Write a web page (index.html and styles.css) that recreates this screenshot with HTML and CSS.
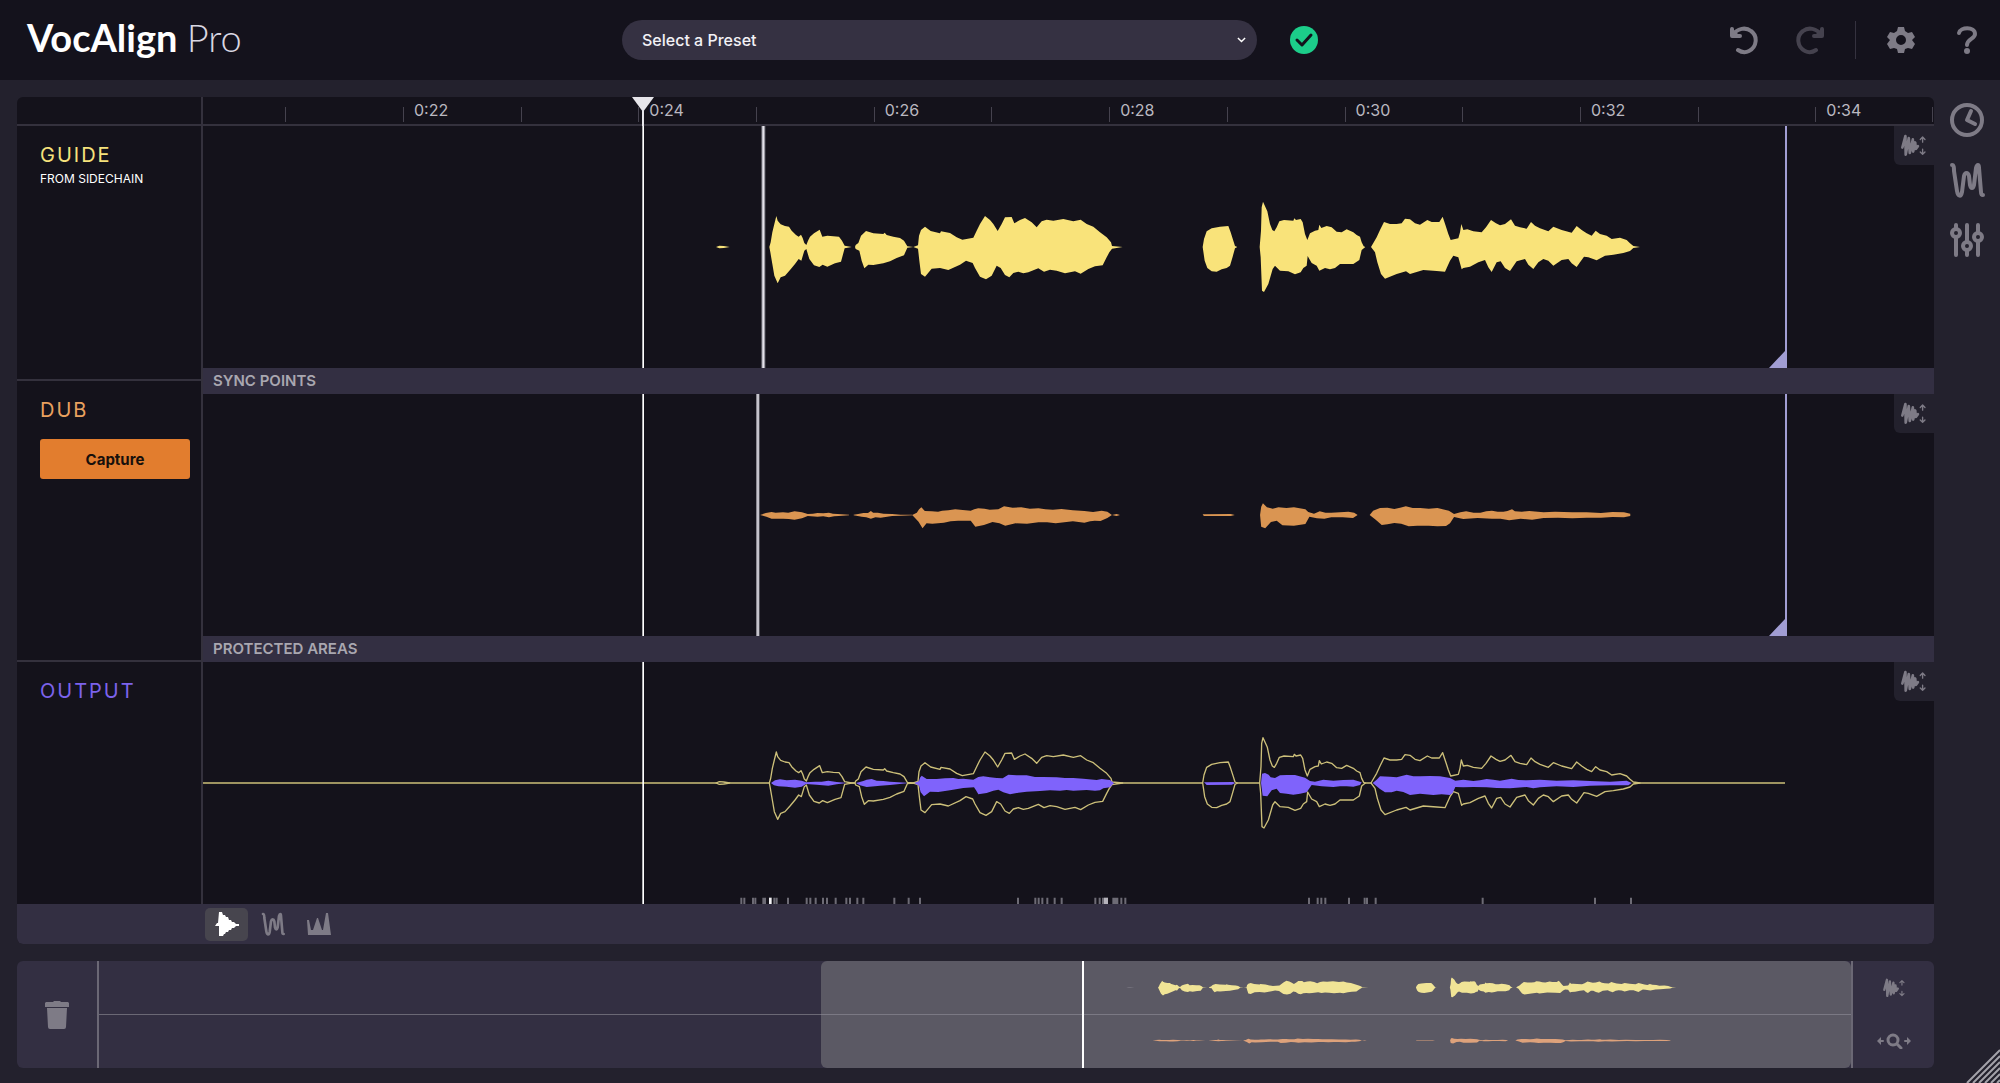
FILE: index.html
```html
<!DOCTYPE html>
<html lang="en">
<head>
    <meta charset="UTF-8">
    <title>VocAlign Pro</title>
    <link rel="stylesheet" href="styles.css">
</head>
<body>
    <!-- shared shapes, three units to the pixel, centre line at y = 0 -->
    <svg class="defs" aria-hidden="true">
        <defs>
            <path id="blip" d="M1539 0L1549-4 1562-3 1580 0 1562 3 1549 4Z"/>
            <g id="guideWave">
                <path transform="translate(1611 -199)" d="M88 199L92 185 97 155 103 130 109 106 113 120 122 131 135 136 147 138 155 150 168 163 176 168 183 162 188 172 193 187 199 193 204 180 210 168 222 158 239 147 247 168 262 165 280 167 297 168 306 180 314 195 335 199 345 199 347 193 355 187 363 165 378 151 400 158 430 160 434 156 440 163 460 168 480 172 492 180 502 197 520 199 534 194 537 165 543 148 555 138 572 151 600 158 603 152 630 157 650 170 667 177 700 171 710 150 720 130 735 106 750 118 760 130 773 151 785 130 795 110 815 109 823 128 840 118 855 112 875 125 890 140 905 122 920 117 940 120 970 115 1000 122 1022 117 1040 130 1060 138 1080 155 1100 170 1113 185 1116 196 1148 199 1116 204 1108 215 1100 230 1088 254 1065 257 1045 265 1022 279 1005 272 975 278 950 270 930 267 912 273 895 263 865 275 850 278 835 273 820 277 808 290 795 283 782 262 770 255 755 285 738 296 720 288 705 262 698 247 678 240 660 252 625 268 600 262 575 264 555 288 543 280 538 240 534 204 520 199 502 201 492 224 470 232 450 242 430 248 400 253 385 252 373 263 365 240 358 210 347 205 345 199 335 199 314 203 303 243 285 248 262 258 248 252 238 259 222 254 208 235 199 205 193 210 184 240 176 235 165 250 150 268 135 285 122 290 113 308 103 285 97 250 91 215Z"/>
                <path transform="translate(2931 -199)" d="M68 199L72 175 80 152 95 143 120 138 145 136 152 155 160 180 165 196 172 199 165 203 158 228 150 255 140 262 125 266 110 273 95 272 82 262 74 240Z
                    M239 199L243 150 245 80 249 63 262 92 270 130 277 148 283 152 290 140 298 122 312 118 340 120 343 113 348 118 362 115 368 125 375 160 382 178 390 158 405 150 415 148 418 132 424 142 440 136 455 140 470 153 485 155 500 146 520 155 530 163 540 168 545 185 551 197 556 199 545 208 538 238 520 250 500 250 480 250 465 262 450 266 435 262 418 270 410 255 395 247 388 235 383 226 380 255 370 262 362 275 345 281 325 272 300 270 285 255 278 265 265 310 252 334 246 330 242 230Z
                    M573 199L580 187 590 170 600 148 612 124 630 130 650 130 665 128 675 114 690 116 705 128 720 132 742 118 755 124 778 124 788 108 797 135 805 160 812 178 835 173 840 155 844 130 850 148 862 146 880 152 905 155 918 140 933 118 948 128 960 134 975 130 993 116 1005 135 1020 140 1040 144 1053 124 1065 135 1080 143 1105 152 1120 138 1145 148 1175 156 1190 136 1205 148 1220 158 1235 165 1247 150 1260 160 1280 165 1295 175 1320 171 1340 178 1350 188 1360 196 1380 199 1360 202 1350 211 1330 217 1300 222 1275 225 1250 239 1225 230 1212 228 1200 245 1190 259 1175 248 1165 235 1145 238 1120 255 1105 240 1090 235 1075 245 1060 265 1045 252 1035 235 1010 242 990 271 975 262 962 242 950 245 935 274 925 260 915 238 895 245 870 258 850 262 845 266 835 230 820 225 810 240 795 273 770 271 730 268 690 280 678 272 650 280 615 294 603 280 592 245 585 215Z"/>
            </g>
            <g id="dubWave">
                <path transform="translate(1611 -105) scale(1.722 1)" d="M35 105L45 99 55 96 62 98 75 97 84 98 95 94 108 97 118 102 127 101 135 99 145 100 155 98 162 101 170 102 190 104 190 106 172 108 164 109 155 112 145 109 135 110 118 108 108 115 95 119 85 117 75 116 55 116 46 110Z
                    M198 104L206 102 215 99 223 99 228 93 232 98 240 98 250 101 265 102 280 104 300 104 300 106 280 107 265 108 245 113 236 112 228 116 220 112 212 110 198 106Z
                    M300 105L308 98 312 88 316 82 322 93 334 94 345 95 352 92 363 91 375 88 388 90 402 92 408 88 415 85 426 86 435 89 450 88 460 79 475 83 490 82 505 86 520 85 532 88 545 89 560 87 580 91 600 93 615 96 630 92 640 95 648 105 640 114 628 123 618 122 610 124 600 128 580 124 565 127 550 130 535 127 520 127 500 131 480 130 462 137 452 130 440 126 425 135 410 140 402 122 380 122 367 124 355 128 335 131 325 130 318 145 311 125Z
                    M648 105L656 102 662 105 656 108Z
                    M806 103L855 102 862 105 855 108 808 108Z
                    M906 105L908 80 911 70 918 82 928 86 938 82 952 84 965 82 985 88 990 96 1000 101 1010 94 1020 98 1030 98 1045 97 1060 95 1070 98 1076 105 1068 114 1050 112 1030 112 1018 116 1005 115 992 110 985 132 965 137 945 136 935 122 925 126 915 145 908 140Z
                    M1097 105L1103 92 1115 84 1128 83 1140 87 1150 83 1160 79 1172 84 1185 84 1200 86 1215 84 1235 92 1244 102 1255 97 1265 94 1278 98 1290 98 1300 94 1310 92 1320 95 1330 95 1337 93 1345 88 1350 94 1362 95 1375 93 1400 97 1420 95 1450 97 1475 97 1500 99 1520 96 1540 97 1551 101 1551 108 1540 112 1520 111 1500 113 1475 113 1450 115 1425 113 1400 114 1380 119 1360 116 1340 121 1325 116 1310 116 1285 114 1260 117 1244 111 1237 130 1230 138 1215 139 1200 137 1180 137 1165 139 1152 131 1140 129 1128 133 1118 135 1108 120Z"/>
            </g>
            <symbol id="gainIcon" viewBox="0 0 80 68">
                <g fill="none" stroke="currentColor" stroke-linecap="round" stroke-linejoin="round">
                    <path stroke-width="8" d="M7 40L16 6 17 61 26 12 29 56 38 16 39 52 45 25 47 44 53 36"/>
                    <path stroke-width="4" d="M67 24V10M60 16l7-7 7 7M67 45v14M60 53l7 7 7-7"/>
                </g>
            </symbol>
            <symbol id="pitchIcon" viewBox="0 0 36 36">
                <path fill="none" stroke="currentColor" stroke-width="4" stroke-linecap="round" stroke-linejoin="round" d="M3 3C5 3 5 6 5 9L8 29C9 35 12 35 13 30L15 14C16 10 19 10 20 14L21 23C22 27 24 27 25 23L27 6C28 2 30 2 30 6L32 30C32 32 33 33 34 33"/>
            </symbol>
        </defs>
    </svg>

    <header class="topbar">
        <h1 class="logo">VocAlign <span>Pro</span></h1>
        <div class="preset">
            <select id="preset" aria-label="Preset">
                <option>Select a Preset</option>
            </select>
            <svg class="chevron" viewBox="0 0 10 6"><path d="M1 1l4 4 4-4"/></svg>
        </div>
        <svg class="status" viewBox="0 0 28 28">
            <circle cx="14" cy="14" r="14" fill="#1ccd8a"/>
            <path d="M7 14l5 5 9-10" fill="none" stroke="#14121c" stroke-width="3" stroke-linecap="round" stroke-linejoin="round"/>
        </svg>
        <nav class="actions">
            <button class="icon" aria-label="Undo">
                <svg viewBox="0 0 30 30"><path fill="none" stroke="currentColor" stroke-width="4" stroke-linecap="round" stroke-linejoin="round" d="M3 4v7h8M4 10C8 3 17 2 22 6C29 11 28 22 20 26C16 28 12 27 9 25"/><path fill="currentColor" d="M2 2v10h10Z"/></svg>
            </button>
            <button class="icon" aria-label="Redo" disabled>
                <svg viewBox="0 0 30 30"><path fill="none" stroke="currentColor" stroke-width="4" stroke-linecap="round" stroke-linejoin="round" d="M27 4v7h-8M26 10C22 3 13 2 8 6C1 11 2 22 10 26C14 28 18 27 21 25"/><path fill="currentColor" d="M28 2v10H18Z"/></svg>
            </button>
            <span class="divider"></span>
            <button class="icon" aria-label="Settings">
                <svg viewBox="0 0 30 30"><path fill="currentColor" fill-rule="evenodd" d="M12 2h6l1 4 3 2 4-1 3 5-3 3 3 4-3 5-4-1-3 1-1 4h-6l-1-4-3-1-4 1-3-5 3-4-3-3 3-5 4 1 3-2ZM15 10a5 5 0 1 0 0 10a5 5 0 1 0 0-10Z"/></svg>
            </button>
            <button class="icon" aria-label="Help">
                <svg viewBox="0 0 30 30"><path fill="none" stroke="currentColor" stroke-width="4" stroke-linecap="round" stroke-linejoin="round" d="M7 8C8 2 23 1 23 9C23 14 15 14 15 20"/><circle cx="15" cy="26" r="3" fill="currentColor"/></svg>
            </button>
        </nav>
    </header>

    <div class="workspace">
        <main class="panels">
            <section class="editor">
                <div class="tracks">
                    <div class="corner"></div>
                    <div class="ruler">
                        <span class="lead"></span>
                        <span class="tick"></span>
                        <span class="tick">0:22</span>
                        <span class="tick"></span>
                        <span class="tick">0:24</span>
                        <span class="tick"></span>
                        <span class="tick">0:26</span>
                        <span class="tick"></span>
                        <span class="tick">0:28</span>
                        <span class="tick"></span>
                        <span class="tick">0:30</span>
                        <span class="tick"></span>
                        <span class="tick">0:32</span>
                        <span class="tick"></span>
                        <span class="tick">0:34</span>
                        <svg class="playhead" viewBox="0 0 22 29"><path d="M0 0h22L11 15Z"/><path d="M10 0h2v29h-2Z"/></svg>
                    </div>

                    <div class="info guide">
                        <h2>GUIDE</h2>
                        <p>FROM SIDECHAIN</p>
                    </div>
                    <div class="lane lane1">
                        <svg class="wave" viewBox="0 -363 5193 726" preserveAspectRatio="none">
                            <path fill="#fff" d="M1318-363h5v726h-5Z"/>
                            <path fill="#77757f" d="M1675-363h12v726h-12Z"/>
                            <path fill="#e4e2ea" d="M1678-363h6v726h-6Z"/>
                            <g fill="#f9e37a"><use href="#blip"/><use href="#guideWave"/></g>
                            <path fill="#a19dd3" d="M4746-363h6v726h-54l48-51Z"/>
                        </svg>
                        <button class="gain" aria-label="Guide waveform height"><svg><use href="#gainIcon"/></svg></button>
                    </div>
                    <div class="strip strip1">SYNC POINTS</div>

                    <div class="info dub">
                        <h2>DUB</h2>
                        <button class="capture">Capture</button>
                    </div>
                    <div class="lane lane2">
                        <svg class="wave" viewBox="0 -363 5193 726" preserveAspectRatio="none">
                            <path fill="#fff" d="M1318-363h5v726h-5Z"/>
                            <path fill="#c4c2cb" d="M1660-363h9v726h-9Z"/>
                            <use href="#dubWave" fill="#da9552"/>
                            <path fill="#a19dd3" d="M4746-363h6v726h-54l48-51Z"/>
                        </svg>
                        <button class="gain" aria-label="Dub waveform height"><svg><use href="#gainIcon"/></svg></button>
                    </div>
                    <div class="strip strip2">PROTECTED AREAS</div>

                    <div class="info output">
                        <h2>OUTPUT</h2>
                    </div>
                    <div class="lane lane3">
                        <svg class="wave" viewBox="0 -363 5193 726" preserveAspectRatio="none">
                            <g fill="#14121b" stroke="#cdc07a" stroke-width="4" stroke-linejoin="round">
                                <path d="M0 0H4746"/>
                                <use href="#blip"/>
                                <use href="#guideWave"/>
                            </g>
                            <g fill="#7f63fb">
                                <path transform="translate(1551 -190)" d="M153 190L165 182 180 179 200 182 225 180 245 183 258 188 285 186 305 186 325 183 350 187 375 189 375 191 350 194 325 198 290 195 258 193 245 201 225 204 200 201 175 200 162 197Z
                                    M408 190L430 184 440 180 455 178 470 183 490 184 510 186 560 189 560 191 510 196 480 198 465 200 440 202 420 197Z
                                    M583 190L597 184 600 174 605 168 620 178 635 178 650 178 675 176 700 175 715 178 730 177 760 180 775 172 790 170 810 173 830 175 848 176 865 165 890 167 920 167 945 172 970 172 1010 173 1035 175 1060 175 1090 177 1130 181 1145 178 1170 181 1182 190 1170 203 1150 206 1140 212 1125 213 1100 211 1060 213 1040 211 1020 213 990 212 960 214 920 216 895 219 870 224 850 218 835 210 820 213 800 220 775 224 768 212 762 203 730 205 690 212 655 217 630 216 612 230 602 218 597 198Z"/>
                                <path transform="translate(2931 -190)" d="M72 188L160 187 165 191 155 195 80 196Z
                                    M243 190L246 162 255 160 266 165 272 173 285 175 300 167 320 166 345 166 375 174 390 184 405 186 430 180 460 183 490 181 520 180 545 188 540 196 520 201 500 200 480 200 460 202 425 200 395 196 380 218 360 222 340 225 320 222 300 220 290 207 275 212 262 230 248 228Z
                                    M578 190L590 180 600 170 630 171 650 173 680 165 700 170 720 170 750 169 780 170 810 175 826 183 850 180 880 184 900 182 920 178 940 180 960 183 995 177 1015 181 1040 182 1080 180 1130 183 1180 182 1230 184 1290 186 1340 183 1355 190 1345 197 1290 197 1230 198 1180 202 1130 200 1080 203 1060 206 1040 202 990 206 950 205 920 203 880 202 850 203 826 202 818 220 810 226 785 224 760 226 720 222 690 226 670 217 650 213 635 218 615 218 600 208Z"/>
                            </g>
                            <g stroke="#6d6b75" stroke-width="6">
                                <path transform="translate(1551 0)" d="M64 344v19M73 344v19M99 344v19M106 344v19M130 344v19M135 344v19M163 344v19M170 344v19M204 344v19M260 344v19M271 344v19M287 344v19M309 344v19M321 344v19M347 344v19M379 344v19M390 344v19M412 344v19M430 344v19M523 344v19M566 344v19M600 344v19M894 344v19M946 344v19M956 344v19M967 344v19M982 344v19M1004 344v19M1025 344v19M1126 344v19M1139 344v19M1149 344v19M1180 344v19M1186 344v19M1192 344v19M1204 344v19M1216 344v19"/>
                                <path transform="translate(2931 0)" d="M387 344v19M413 344v19M424 344v19M436 344v19M507 344v19M554 344v19M561 344v19M587 344v19M908 344v19M1245 344v19M1353 344v19"/>
                                <path stroke="#b5b3bb" stroke-width="12" d="M2709 344v19"/>
                                <path stroke="#f4f3f6" stroke-width="8" d="M1702 344v19"/>
                            </g>
                            <path fill="#fff" d="M1318-363h5v726h-5Z"/>
                        </svg>
                        <button class="gain" aria-label="Output waveform height"><svg><use href="#gainIcon"/></svg></button>
                    </div>
                </div>

                <div class="viewbar">
                    <button class="view active" aria-label="Waveform view">
                        <svg viewBox="0 0 24 24"><path fill="#fff" d="M0 14l2-3h1l1-11h3l1 3h2l1 2h2l1 3h2l1 2h2l2 2h3v2h-3l-2 2h-2l-1 2h-2l-1 2h-2l-1 2H9l-1 2H4V14Z"/></svg>
                    </button>
                    <button class="view" aria-label="Pitch view"><svg><use href="#pitchIcon"/></svg></button>
                    <button class="view" aria-label="Energy view">
                        <svg viewBox="0 0 24 24"><path fill="currentColor" d="M1 23L0 8h2l2 10h2l4-12h1l4 12h1L19 1h2l3 22Z"/></svg>
                    </button>
                </div>
            </section>

            <section class="overview">
                <button class="trash" aria-label="Clear">
                    <svg viewBox="0 0 24 28"><path fill="currentColor" d="M8 1L9 0h6l1 1h7l1 1v4H0V2l1-1ZM2 7h20l-1 19q0 2-2 2H5q-2 0-2-2Z"/></svg>
                </button>
                <div class="map">
                    <div class="window">
                        <svg class="mini" viewBox="0 -363 5193 726" preserveAspectRatio="none">
                            <g fill="#f0e496"><use href="#guideWave"/></g>
                            <use href="#blip" fill="#85838d"/>
                        </svg>
                        <svg class="mini" viewBox="0 -363 5193 726" preserveAspectRatio="none">
                            <use href="#dubWave" fill="#dea27b"/>
                        </svg>
                        <span class="cursor"></span>
                    </div>
                </div>
                <div class="mapTools">
                    <button aria-label="Overview waveform height"><svg><use href="#gainIcon"/></svg></button>
                    <button aria-label="Zoom to fit">
                        <svg class="fit" viewBox="0 0 34 16"><g fill="none" stroke="currentColor" stroke-width="3" stroke-linecap="round"><circle cx="16" cy="7" r="5"/><path d="M20 11l4 4"/><path stroke-width="2" d="M3 8h3M28 8h3"/></g><path fill="currentColor" d="M0 8l4-4v8ZM34 8l-4-4v8Z"/></svg>
                    </button>
                </div>
            </section>
        </main>

        <aside class="sidebar">
            <button class="icon" aria-label="Timing">
                <svg viewBox="0 0 36 36"><g fill="none" stroke="currentColor" stroke-width="4" stroke-linecap="round" stroke-linejoin="round"><circle cx="18" cy="18" r="15"/><path d="M22 9l-4 9 8 4"/></g></svg>
            </button>
            <button class="icon" aria-label="Pitch"><svg><use href="#pitchIcon"/></svg></button>
            <button class="icon" aria-label="Mixer">
                <svg viewBox="0 0 36 36"><g fill="none" stroke="currentColor" stroke-width="4" stroke-linecap="round"><path d="M7 3v3M7 16v17M18 3v16M18 29v4M29 3v7M29 20v13"/><circle cx="7" cy="11" r="4"/><circle cx="18" cy="24" r="4"/><circle cx="29" cy="15" r="4"/></g></svg>
            </button>
        </aside>
    </div>

    <svg class="grip" viewBox="0 0 34 34"><path stroke="#a3a2a9" stroke-width="2" d="M1 34L34 1M7 34L34 7M13 34L34 13M19 34L34 19M25 34l9-9M31 34l3-3"/></svg>
</body>
</html>
```

FILE: styles.css
```css
* {
    box-sizing: border-box;
}

body {
    display: flex;
    flex-direction: column;
    min-height: 100vh;
    margin: 0;
    background: #23212d;
    color: #fff;
    font-family: Inter, "Liberation Sans", sans-serif;
    font-size: 16px;
}

h1, h2, p {
    margin: 0;
}

svg {
    display: block;
}

button {
    padding: 0;
    border: none;
    background: none;
    color: #7e7b86;
    font-family: inherit;
    cursor: pointer;
}

.defs {
    position: absolute;
    width: 0;
    height: 0;
}

/* top bar */
.topbar {
    display: grid;
    grid-template-columns: 31.1% 31.75% 28px 1fr;
    align-items: center;
    height: 80px;
    background: #14121c;
}

.logo {
    padding: 0 0 6px 27px;
    font-family: Lato, sans-serif;
    font-size: 38px;
    line-height: 40px;
    font-weight: bold;
}

.logo span {
    color: #d9d7e2;
    font-weight: 300;
}

.preset {
    display: grid;
    align-items: center;
}

.preset select {
    grid-area: 1 / 1;
    width: 100%;
    height: 40px;
    padding: 0 20px;
    border: none;
    border-radius: 20px;
    appearance: none;
    background: #353142;
    color: #f3f2f6;
    font-family: inherit;
    font-size: 16px;
    font-weight: 500;
}

.chevron {
    grid-area: 1 / 1;
    justify-self: end;
    width: 9px;
    margin-right: 11px;
    fill: none;
    stroke: #fff;
    stroke-width: 1.6;
    pointer-events: none;
}

.status {
    width: 28px;
    margin-left: 33px;
}

.actions {
    display: flex;
    align-items: center;
    justify-content: flex-end;
    gap: 36px;
    padding-right: 18px;
}

.actions svg {
    width: 30px;
}

.actions .icon:disabled {
    color: #45424e;
}

.divider {
    width: 1px;
    height: 38px;
    margin: 0 -6px;
    background: #35323f;
}

/* layout */
.workspace {
    display: flex;
    flex: 1;
}

.panels {
    display: flex;
    flex: 1;
    flex-direction: column;
    gap: 17px;
    padding: 17px 0 15px 17px;
}

.sidebar {
    display: flex;
    flex-direction: column;
    align-items: center;
    gap: 24px;
    width: 66px;
    padding-top: 22px;
}

.sidebar svg {
    width: 36px;
    height: 36px;
}

.editor {
    display: flex;
    flex: 1;
    flex-direction: column;
    overflow: hidden;
    border-radius: 6px;
    background: #14121b;
}

.tracks {
    display: grid;
    flex: 1;
    grid-template-columns: 186px 1fr;
    grid-template-rows: 29px 1fr 26px 1fr 26px 1fr;
}

.corner, .ruler {
    border-bottom: 2px solid #34313d;
}

.corner, .info {
    border-right: 2px solid #34313d;
}

.ruler {
    position: relative;
    display: flex;
    align-items: center;
}

.lead {
    flex: 0 0 4.75%;
}

.tick {
    flex: 0 0 6.8%;
    height: 15px;
    margin-top: 8px;
    padding-left: 10px;
    border-left: 1px solid #45424e;
    color: #bab8c0;
    line-height: 7px;
}

.tick:last-of-type {
    border-right: 1px solid #45424e;
}

.playhead {
    position: absolute;
    top: 0;
    left: 25.4%;
    width: 22px;
    margin-left: -11px;
    fill: #e6e5ea;
}

/* the name column divides a little lower than the lanes do */
.info {
    grid-column: 1;
    padding: 17px 11px 0 23px;
}

.info h2 {
    font-size: 20px;
    font-weight: 400;
    line-height: 24px;
    letter-spacing: 2px;
}

.info p {
    margin-top: 4px;
    font-size: 12px;
    line-height: 16px;
}

.guide {
    grid-row: 2 / 4;
    margin-bottom: 13px;
    border-bottom: 2px solid #34313d;
}

.guide h2 {
    color: #f6e27c;
}

.dub {
    grid-row: 3 / 6;
    margin-top: 13px;
    border-bottom: 2px solid #34313d;
}

.dub h2 {
    color: #e9a15f;
}

.output {
    grid-row: 6;
}

.output h2 {
    color: #7c63ec;
}

.capture {
    width: 100%;
    height: 40px;
    margin-top: 17px;
    border-radius: 3px;
    background: #e27d2e;
    color: #17100c;
    font-size: 15px;
    font-weight: 700;
}

.lane {
    position: relative;
    grid-column: 2;
    min-height: 0;
}

.lane1 {
    grid-row: 2;
}

.lane2 {
    grid-row: 4;
}

.lane3 {
    grid-row: 6;
}

.wave {
    position: absolute;
    width: 100%;
    height: 100%;
}

.gain {
    position: absolute;
    top: 0;
    right: 0;
    width: 40px;
    height: 39px;
    padding-left: 6px;
    border-bottom-left-radius: 6px;
    background: #23212d;
}

.gain svg {
    width: 27px;
    height: 23px;
}

.strip {
    grid-column: 2;
    padding-left: 10px;
    background: #332f42;
    color: #a9a7b0;
    font-size: 15px;
    font-weight: 600;
    line-height: 26px;
}

.strip1 {
    grid-row: 3;
}

.strip2 {
    grid-row: 5;
}

.viewbar {
    display: flex;
    align-items: center;
    gap: 3px;
    height: 40px;
    padding-left: 188px;
    background: #332f42;
}

.view {
    display: grid;
    place-items: center;
    width: 43px;
    height: 33px;
    border-radius: 5px;
}

.view svg {
    width: 24px;
    height: 24px;
}

.active {
    background: #47454e;
}

/* overview */
.overview {
    display: grid;
    grid-template-columns: 80px 1fr 81px;
    grid-template-rows: 107px;
    overflow: hidden;
    border-radius: 6px;
    background: #332f42;
}

.trash svg {
    width: 24px;
    margin: auto;
}

.map {
    display: flex;
    justify-content: flex-end;
    border: solid #6b6875;
    border-width: 0 2px;
    background: linear-gradient(#6b6875, #6b6875) center / 100% 1px no-repeat;
}

.window {
    position: relative;
    display: grid;
    grid-template-rows: 53px 53px;
    width: 58.8%;
    border-radius: 6px;
    background: linear-gradient(#7b7984, #7b7984) center / 100% 1px no-repeat, #5b5964;
}

.mini {
    width: 100%;
    height: 53px;
}

.cursor {
    position: absolute;
    left: 25.4%;
    width: 2px;
    height: 100%;
    background: #fff;
}

.mapTools {
    display: grid;
    grid-template-rows: 1fr 1fr;
}

.mapTools svg {
    width: 24px;
    height: 20px;
    margin: auto;
}

.mapTools .fit {
    width: 34px;
    height: 16px;
}

.grip {
    position: absolute;
    right: 0;
    bottom: 0;
    width: 34px;
    height: 34px;
}
```
